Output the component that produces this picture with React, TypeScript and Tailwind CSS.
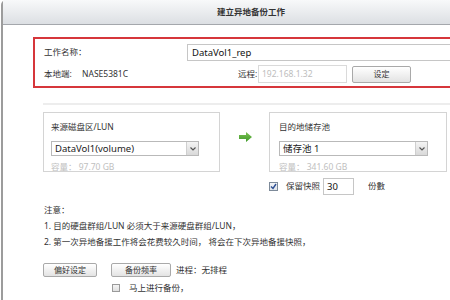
const font = { fontFamily: '"Noto Sans", "Noto Sans CJK SC", sans-serif' };

function Select({ text, w }: { text: string; w: string }) {
  return (
    <div className={`${w} h-[15px] border border-[#b9b9b9] bg-white flex items-stretch`}>
      <div className="flex-1 pl-[3px] text-[9.5px] leading-[13px] text-[#222] whitespace-nowrap">{text}</div>
      <div className="w-[12px] border-l border-[#cfcfcf] bg-gradient-to-b from-[#f4f4f4] to-[#d9d9d9] flex items-center justify-center">
        <svg width="6" height="4" viewBox="0 0 6 4">
          <path d="M0.5 0.5 L3 3 L5.5 0.5" stroke="#555" strokeWidth="1.2" fill="none" />
        </svg>
      </div>
    </div>
  );
}

function Btn({ label, w }: { label: string; w: string }) {
  return (
    <div className={`${w} h-[14px] border border-[#a9a9a9] rounded-[2px] bg-gradient-to-b from-[#ffffff] to-[#e3e3e3] flex items-center justify-center text-[8px] text-[#333] whitespace-nowrap`}>
      {label}
    </div>
  );
}

export default function App() {
  return (
    <div className="w-[450px] h-[300px] overflow-hidden bg-white text-[#333] whitespace-nowrap" style={font}>
      <div className="h-full ml-[1px] border-l-2 border-[#9c9c9c] rounded-tl-[5px] flex flex-col">
        <div className="h-[25px] shrink-0 border-b border-[#a4a7ac] bg-gradient-to-b from-[#f8f9fa] to-[#dcdfe3] flex items-center pl-[214px] text-[8.5px] font-bold text-[#333]">
          建立异地备份工作
        </div>

        <div className="ml-[30px] mt-[12px] w-[440px] border-2 border-[#d6363b] pt-[5px] pb-[3px]">
          <div className="flex items-center h-[17px]">
            <span className="pl-[9px] w-[152px] text-[8.5px]">工作名称：</span>
            <div className="w-[270px] h-[17px] border border-[#c6c6c6] pl-[4px] text-[9.5px] leading-[15px] text-[#111]">DataVol1_rep</div>
          </div>
          <div className="flex items-center h-[18px] mt-[4px]">
            <span className="pl-[9px] w-[47px] text-[8.5px]">本地端:</span>
            <span className="w-[156px] text-[8.5px]">NASE5381C</span>
            <span className="w-[20px] text-[8.5px]">远程:</span>
            <div className="w-[89px] h-[18px] border border-[#dadada] pl-[3px] text-[8.5px] leading-[16px] text-[#bdbdbd]">192.168.1.32</div>
            <div className="ml-[5px]">
              <Btn label="设定" w="w-[59px] h-[17px]" />
            </div>
          </div>
        </div>

        <div className="ml-[40px] mt-[15px] h-[2px] bg-[#ededed]" />

        <div className="flex ml-[40px] mt-[7px]">
          <div className="w-[177px] h-[60px] border border-[#d4d4d4] overflow-hidden pl-[7px] pt-[9px]">
            <div className="text-[8.5px] leading-[10px]">来源磁盘区/LUN</div>
            <div className="mt-[9px]">
              <Select text="DataVol1(volume)" w="w-[148px]" />
            </div>
            <div className="mt-[6px] text-[8.5px] leading-[10px] text-[#c0c0c0]">容量： 97.70 GB</div>
          </div>
          <div className="w-[49px] flex justify-center pt-[20px] pl-[2px]">
            <svg width="13" height="10" viewBox="0 0 13 10">
              <defs>
                <linearGradient id="g" x1="0" y1="0" x2="0" y2="1">
                  <stop offset="0" stopColor="#7cc152" />
                  <stop offset="1" stopColor="#3f9a2a" />
                </linearGradient>
              </defs>
              <path d="M0 3 H7 V0 L13 5 L7 10 V7 H0 Z" fill="url(#g)" />
            </svg>
          </div>
          <div className="flex flex-col">
            <div className="w-[178px] h-[60px] border border-[#d4d4d4] overflow-hidden pl-[9px] pt-[9px]">
              <div className="text-[8.5px] leading-[10px]">目的地储存池</div>
              <div className="mt-[9px]">
                <Select text="储存池 1" w="w-[149px]" />
              </div>
              <div className="mt-[6px] text-[8.5px] leading-[10px] text-[#c0c0c0]">容量： 341.60 GB</div>
            </div>
            <div className="flex items-center h-[18px] mt-[5px]">
              <div className="w-[9px] h-[9px] border border-[#7d8a99] bg-gradient-to-b from-[#f2f4f7] to-[#dfe4ea] flex items-center justify-center">
                <svg width="7" height="7" viewBox="0 0 7 7">
                  <path d="M1 3.5 L3 5.5 L6 1" stroke="#2d4f93" strokeWidth="1.4" fill="none" />
                </svg>
              </div>
              <span className="ml-[8px] text-[8.5px] w-[37px]">保留快照</span>
              <div className="w-[31px] h-[17px] border border-[#c6c6c6] pl-[3px] text-[9.5px] leading-[15px] text-[#111]">30</div>
              <span className="ml-[14px] text-[8.5px]">份數</span>
            </div>
          </div>
        </div>

        <div className="ml-[41px] mt-[7px] text-[8.5px] leading-[16px]">
          <div>注意：</div>
          <div>1. 目的硬盘群组/LUN 必须大于来源硬盘群组/LUN，</div>
          <div>2. 第一次异地备援工作将会花费较久时间， 将会在下次异地备援快照，</div>
        </div>

        <div className="ml-[40px] mt-[13px] flex items-center">
          <Btn label="偏好设定" w="w-[54px]" />
          <div className="ml-[14px]">
            <Btn label="备份频率" w="w-[60px]" />
          </div>
          <span className="ml-[5px] text-[8.5px]">进程：无排程</span>
        </div>
        <div className="ml-[109px] mt-[5px] flex items-center">
          <div className="w-[8px] h-[8px] border border-[#9a9a9a] bg-gradient-to-b from-[#f4f4f4] to-[#e0e0e0]" />
          <span className="ml-[9px] text-[8.5px]">马上进行备份，</span>
        </div>
      </div>
    </div>
  );
}
